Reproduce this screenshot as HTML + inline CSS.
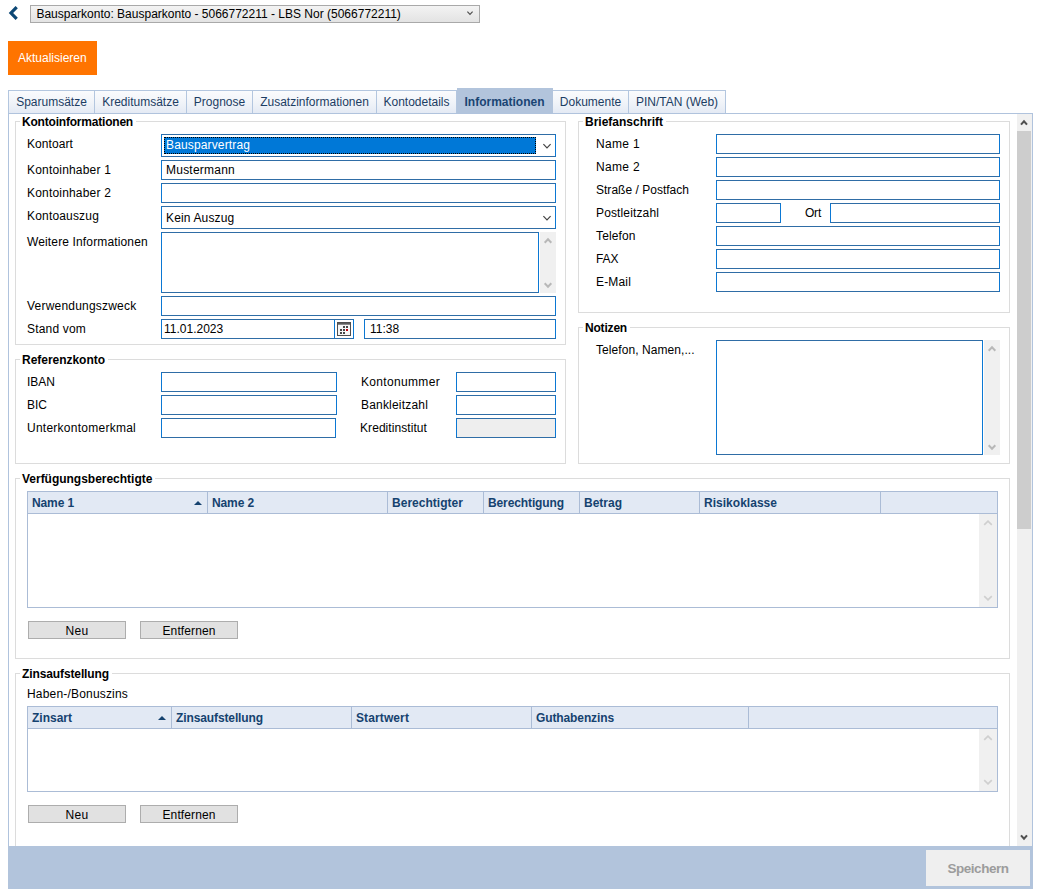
<!DOCTYPE html>
<html>
<head>
<meta charset="utf-8">
<style>
*{box-sizing:border-box;margin:0;padding:0}
html,body{width:1037px;height:892px;background:#fff;overflow:hidden}
body{position:relative;font-family:"Liberation Sans",sans-serif;font-size:12px;color:#000;line-height:14px}
.a{position:absolute}
.t{position:absolute;white-space:nowrap;line-height:14px;height:14px}
.b{font-weight:bold}
#sel{left:30px;top:5px;width:450px;height:18px;border:1px solid #a9a9a9;background:linear-gradient(#f3f3f3,#e3e3e3)}
#upd{left:8px;top:41px;width:89px;height:34px;background:#ff7400}
.tab{position:absolute;top:90px;height:24px;border:1px solid #b3c6df;border-left:none;background:linear-gradient(#fafbfd 0%,#f1f4f9 50%,#e4eaf4 100%);color:#1c3d63;text-align:center;line-height:22px;white-space:nowrap}
.tab.first{border-left:1px solid #b3c6df}
.tab.act{top:88px;height:26px;background:#b2c4dc;border-color:#b2c4dc;font-weight:bold;color:#1a4473;line-height:26px}
#panel{left:8px;top:113px;width:1025px;height:734px;border:1px solid #b0c3dd;border-bottom:none;background:#fff}
#bar{left:8px;top:846px;width:1025px;height:43px;background:#b2c4dc}
#save{left:926px;top:850px;width:105px;height:36px;background:#efefef;color:#a2a2a2;font-weight:bold;font-size:14px;text-align:center;line-height:36px}
.fs{position:absolute;border:1px solid #dcdcdc}
.lg{position:absolute;background:#fff;font-weight:bold;white-space:nowrap;line-height:14px;height:14px;padding:0 3px 0 2px}
.in{position:absolute;height:20px;background:#fff;border:1px solid #2f6da6;border-left-color:#0b78d4;border-right-color:#0b78d4}
.dis{background:#eeeeee}
.sb{position:absolute;background:#f0f0f0}
.th{position:absolute;height:23px;background:#e2e9f4;border:1px solid #abbcd6}
.thc{position:absolute;top:0;width:1px;height:21px;background:#abbcd6}
.tht{position:absolute;top:4px;line-height:14px;font-weight:bold;color:#15426f;white-space:nowrap}
.tb{position:absolute;border:1px solid #abbcd6;border-top:none;background:#fff}
.btn{position:absolute;width:98px;height:18px;background:#e1e1e1;border:1px solid #adadad;text-align:center;line-height:18px}
</style>
</head>
<body>
<svg class="a" style="left:8px;top:5px" width="12" height="17" viewBox="0 0 12 17"><path d="M8.7 2.2 L3 8 L8.7 13.8" fill="none" stroke="#0c4775" stroke-width="3.2"/></svg>
<div id="sel" class="a"></div>
<div class="t " style="left:36.4px;top:7px;">Bausparkonto: Bausparkonto - 5066772211 - LBS Nor (5066772211)</div>
<svg class="a" style="left:465.4px;top:9.3px" width="10" height="8" viewBox="0 0 10 8"><path d="M2.4 2.7 L5 5.3 L7.6 2.7" fill="none" stroke="#505050" stroke-width="1.2"/></svg>
<div id="upd" class="a"></div>
<div class="t " style="left:18px;top:51px;color:#fff">Aktualisieren</div>
<div class="tab first" style="left:8px;width:87px">Sparumsätze</div>
<div class="tab" style="left:95px;width:92px">Kreditumsätze</div>
<div class="tab" style="left:187px;width:66px">Prognose</div>
<div class="tab" style="left:253px;width:124px">Zusatzinformationen</div>
<div class="tab" style="left:377px;width:80px">Kontodetails</div>
<div class="tab act" style="left:457px;width:96px">Informationen</div>
<div class="tab" style="left:553px;width:76px">Dokumente</div>
<div class="tab" style="left:629px;width:97px">PIN/TAN (Web)</div>
<div id="panel" class="a"></div>
<div class="sb" style="left:1017px;top:114px;width:15px;height:732px"></div>
<div class="a" style="left:1017px;top:131px;width:14px;height:398px;background:#cdcdcd"></div>
<svg class="a" style="left:1018.5px;top:119px" width="10" height="8" viewBox="0 0 10 8"><path d="M2.0 5.6 L5 2.4 L8.0 5.6" fill="none" stroke="#505050" stroke-width="2.1"/></svg>
<svg class="a" style="left:1018.5px;top:833px" width="10" height="8" viewBox="0 0 10 8"><path d="M2.0 2.4 L5 5.6 L8.0 2.4" fill="none" stroke="#505050" stroke-width="2.1"/></svg>
<div class="fs" style="left:15px;top:121px;width:551px;height:224px"></div>
<div class="lg" style="left:20px;top:115px;letter-spacing:-0.203px;">Kontoinformationen</div>
<div class="t " style="left:27px;top:137px;letter-spacing:0.080px;">Kontoart</div>
<div class="t " style="left:27px;top:163px;letter-spacing:0.186px;">Kontoinhaber 1</div>
<div class="t " style="left:27px;top:186px;letter-spacing:0.186px;">Kontoinhaber 2</div>
<div class="t " style="left:27px;top:209px;letter-spacing:0.177px;">Kontoauszug</div>
<div class="t " style="left:27px;top:235px;letter-spacing:0.140px;">Weitere Informationen</div>
<div class="t " style="left:27px;top:299px;letter-spacing:0.205px;">Verwendungszweck</div>
<div class="t " style="left:27px;top:322px;letter-spacing:0.182px;">Stand vom</div>
<div class="in " style="left:161px;top:134px;width:395px;height:23px"></div>
<div class="a" style="left:164px;top:137px;width:372px;height:17px;background:#0078d7;outline:1px dotted #000;outline-offset:-1px"></div>
<div class="t " style="left:166px;top:138px;letter-spacing:0.140px;color:#fff">Bausparvertrag</div>
<svg class="a" style="left:542px;top:142px" width="10" height="8" viewBox="0 0 10 8"><path d="M1.4 2.2 L5 5.8 L8.6 2.2" fill="none" stroke="#444" stroke-width="1.2"/></svg>
<div class="in " style="left:161px;top:160px;width:395px;height:20px"></div>
<div class="t " style="left:166px;top:163px;letter-spacing:0.231px;">Mustermann</div>
<div class="in " style="left:161px;top:183px;width:395px;height:20px"></div>
<div class="in " style="left:161px;top:206px;width:395px;height:23px"></div>
<div class="t " style="left:166px;top:211px;letter-spacing:0.148px;">Kein Auszug</div>
<svg class="a" style="left:542px;top:214px" width="10" height="8" viewBox="0 0 10 8"><path d="M1.4 2.2 L5 5.8 L8.6 2.2" fill="none" stroke="#444" stroke-width="1.2"/></svg>
<div class="in " style="left:161px;top:232px;width:378px;height:61px"></div>
<div class="sb" style="left:540px;top:232px;width:16px;height:61px"></div>
<svg class="a" style="left:542.5px;top:237px" width="10" height="8" viewBox="0 0 10 8"><path d="M1.7000000000000002 5.7 L5 2.3 L8.3 5.7" fill="none" stroke="#b8b8b8" stroke-width="2.0"/></svg>
<svg class="a" style="left:542.5px;top:280.8px" width="10" height="8" viewBox="0 0 10 8"><path d="M1.7000000000000002 2.3 L5 5.7 L8.3 2.3" fill="none" stroke="#b8b8b8" stroke-width="2.0"/></svg>
<div class="in " style="left:161px;top:296px;width:395px;height:20px"></div>
<div class="in " style="left:161px;top:319px;width:193px;height:20px"></div>
<div class="t " style="left:164px;top:322px;">11.01.2023</div>
<div class="a" style="left:334px;top:320px;width:1px;height:18px;background:#0b78d4"></div>
<svg class="a" style="left:337px;top:322px" width="14" height="14" viewBox="0 0 14 14"><rect x="0.5" y="0.5" width="13" height="13" fill="#f7f7f7" stroke="#4f4f4f"/><rect x="1" y="1" width="12" height="1.7" fill="#5c5c5c"/><g fill="#474747"><rect x="6" y="4" width="2" height="2"/><rect x="9" y="4" width="2" height="2"/><rect x="3" y="7" width="2" height="2"/><rect x="6" y="7" width="2" height="2"/><rect x="3" y="10" width="2" height="2"/><rect x="6" y="10" width="2" height="2"/></g><rect x="9" y="7" width="2" height="2" fill="#c4000c"/></svg>
<div class="in " style="left:364px;top:319px;width:192px;height:20px"></div>
<div class="t " style="left:370px;top:322px;">11:38</div>
<div class="fs" style="left:15px;top:359px;width:551px;height:105px"></div>
<div class="lg" style="left:20px;top:353px;letter-spacing:-0.027px;">Referenzkonto</div>
<div class="t " style="left:27px;top:375px;letter-spacing:-0.002px;">IBAN</div>
<div class="t " style="left:27px;top:398px;letter-spacing:-0.001px;">BIC</div>
<div class="t " style="left:27px;top:421px;letter-spacing:0.253px;">Unterkontomerkmal</div>
<div class="in " style="left:161px;top:372px;width:176px;height:20px"></div>
<div class="in " style="left:161px;top:395px;width:176px;height:20px"></div>
<div class="in " style="left:161px;top:418px;width:175px;height:20px"></div>
<div class="t " style="left:361px;top:375px;letter-spacing:0.330px;">Kontonummer</div>
<div class="t " style="left:361px;top:398px;letter-spacing:0.191px;">Bankleitzahl</div>
<div class="t " style="left:360px;top:421px;letter-spacing:0.069px;">Kreditinstitut</div>
<div class="in " style="left:456px;top:372px;width:100px;height:20px"></div>
<div class="in " style="left:456px;top:395px;width:100px;height:20px"></div>
<div class="in dis" style="left:456px;top:418px;width:100px;height:20px"></div>
<div class="fs" style="left:578px;top:121px;width:432px;height:192px"></div>
<div class="lg" style="left:583px;top:115px;letter-spacing:-0.001px;">Briefanschrift</div>
<div class="t " style="left:596px;top:137px;letter-spacing:0.330px;">Name 1</div>
<div class="in " style="left:716px;top:134px;width:284px;height:20px"></div>
<div class="t " style="left:596px;top:160px;letter-spacing:0.330px;">Name 2</div>
<div class="in " style="left:716px;top:157px;width:284px;height:20px"></div>
<div class="t " style="left:596px;top:183px;letter-spacing:0.017px;">Straße / Postfach</div>
<div class="in " style="left:716px;top:180px;width:284px;height:20px"></div>
<div class="t " style="left:596px;top:206px;letter-spacing:0.136px;">Postleitzahl</div>
<div class="in " style="left:716px;top:203px;width:65px;height:20px"></div>
<div class="in " style="left:830px;top:203px;width:170px;height:20px"></div>
<div class="t " style="left:596px;top:229px;letter-spacing:0.139px;">Telefon</div>
<div class="in " style="left:716px;top:226px;width:284px;height:20px"></div>
<div class="t " style="left:596px;top:252px;letter-spacing:-0.113px;">FAX</div>
<div class="in " style="left:716px;top:249px;width:284px;height:20px"></div>
<div class="t " style="left:596px;top:275px;letter-spacing:0.166px;">E-Mail</div>
<div class="in " style="left:716px;top:272px;width:284px;height:20px"></div>
<div class="t " style="left:805px;top:206px;letter-spacing:-0.221px;">Ort</div>
<div class="fs" style="left:578px;top:327px;width:432px;height:137px"></div>
<div class="lg" style="left:583px;top:321px;letter-spacing:-0.190px;">Notizen</div>
<div class="t " style="left:596px;top:343px;letter-spacing:0.071px;">Telefon, Namen,...</div>
<div class="in " style="left:716px;top:340px;width:267px;height:115px"></div>
<div class="sb" style="left:984px;top:340px;width:16px;height:115px"></div>
<svg class="a" style="left:986.5px;top:345px" width="10" height="8" viewBox="0 0 10 8"><path d="M1.7000000000000002 5.7 L5 2.3 L8.3 5.7" fill="none" stroke="#b8b8b8" stroke-width="2.0"/></svg>
<svg class="a" style="left:986.5px;top:442.8px" width="10" height="8" viewBox="0 0 10 8"><path d="M1.7000000000000002 2.3 L5 5.7 L8.3 2.3" fill="none" stroke="#b8b8b8" stroke-width="2.0"/></svg>
<div class="fs" style="left:15px;top:478px;width:995px;height:181px"></div>
<div class="lg" style="left:20px;top:472px;letter-spacing:-0.017px;">Verfügungsberechtigte</div>
<div class="th" style="left:27px;top:491px;width:971px">
<div class="tht" style="left:4px;letter-spacing:-0.115px;">Name 1</div>
<div class="thc" style="left:179px"></div>
<div class="tht" style="left:184px;letter-spacing:-0.115px;">Name 2</div>
<div class="thc" style="left:359px"></div>
<div class="tht" style="left:364px;letter-spacing:0.026px;">Berechtigter</div>
<div class="thc" style="left:455px"></div>
<div class="tht" style="left:460px;letter-spacing:-0.112px;">Berechtigung</div>
<div class="thc" style="left:551px"></div>
<div class="tht" style="left:556px;letter-spacing:-0.002px;">Betrag</div>
<div class="thc" style="left:671px"></div>
<div class="tht" style="left:676px;letter-spacing:0.024px;">Risikoklasse</div>
<div class="thc" style="left:852px"></div>
<svg class="a" style="left:166px;top:9px" width="8" height="4" viewBox="0 0 8 4"><path d="M0 4 L4 0 L8 4 Z" fill="#15426f"/></svg>
</div>
<div class="tb" style="left:27px;top:514px;width:971px;height:94px"></div>
<div class="sb" style="left:979px;top:514px;width:18px;height:93px"></div>
<svg class="a" style="left:982.5px;top:519.3px" width="10" height="8" viewBox="0 0 10 8"><path d="M1.2000000000000002 5.85 L5 2.15 L8.8 5.85" fill="none" stroke="#cfcfcf" stroke-width="1.7"/></svg>
<svg class="a" style="left:982.5px;top:593.7px" width="10" height="8" viewBox="0 0 10 8"><path d="M1.2000000000000002 2.15 L5 5.85 L8.8 2.15" fill="none" stroke="#cfcfcf" stroke-width="1.7"/></svg>
<div class="btn" style="left:28px;top:621px;letter-spacing:0.329px;">Neu</div>
<div class="btn" style="left:140px;top:621px;letter-spacing:0.107px;">Entfernen</div>
<div class="fs" style="left:15px;top:673px;width:995px;height:200px;border-bottom:none"></div>
<div class="lg" style="left:20px;top:667px;letter-spacing:-0.111px;">Zinsaufstellung</div>
<div class="t " style="left:27px;top:687px;letter-spacing:0.184px;">Haben-/Bonuszins</div>
<div class="th" style="left:27px;top:706px;width:971px">
<div class="tht" style="left:4px;letter-spacing:-0.001px;">Zinsart</div>
<div class="thc" style="left:143px"></div>
<div class="tht" style="left:148px;letter-spacing:-0.111px;">Zinsaufstellung</div>
<div class="thc" style="left:323px"></div>
<div class="tht" style="left:328px;letter-spacing:0.110px;">Startwert</div>
<div class="thc" style="left:503px"></div>
<div class="tht" style="left:508px;letter-spacing:-0.111px;">Guthabenzins</div>
<div class="thc" style="left:720px"></div>
<svg class="a" style="left:130px;top:9px" width="8" height="4" viewBox="0 0 8 4"><path d="M0 4 L4 0 L8 4 Z" fill="#15426f"/></svg>
</div>
<div class="tb" style="left:27px;top:729px;width:971px;height:63px"></div>
<div class="sb" style="left:979px;top:729px;width:18px;height:62px"></div>
<svg class="a" style="left:982.5px;top:734.3px" width="10" height="8" viewBox="0 0 10 8"><path d="M1.2000000000000002 5.85 L5 2.15 L8.8 5.85" fill="none" stroke="#cfcfcf" stroke-width="1.7"/></svg>
<svg class="a" style="left:982.5px;top:777.7px" width="10" height="8" viewBox="0 0 10 8"><path d="M1.2000000000000002 2.15 L5 5.85 L8.8 2.15" fill="none" stroke="#cfcfcf" stroke-width="1.7"/></svg>
<div class="btn" style="left:28px;top:805px;letter-spacing:0.329px;">Neu</div>
<div class="btn" style="left:140px;top:805px;letter-spacing:0.107px;">Entfernen</div>
<div id="bar" class="a"></div>
<div class="a" style="left:926px;top:850px;width:104px;height:36px;background:#efefef;color:#9c9c9c;font-weight:bold;font-size:13.5px;letter-spacing:-0.45px;text-align:center;line-height:37px">Speichern</div>
</body>
</html>
